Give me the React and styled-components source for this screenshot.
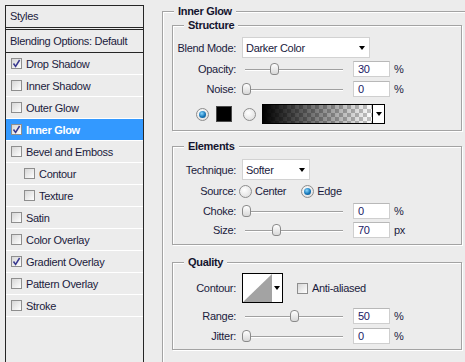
import React from "react";
import styled, { createGlobalStyle, css } from "styled-components";

const GlobalStyle = createGlobalStyle`
  html, body {
    margin: 0;
    padding: 0;
    background: #ececec;
    overflow: hidden;
  }
  body {
    font-family: "Liberation Sans", Arial, sans-serif;
    font-size: 11px;
    letter-spacing: -0.3px;
    color: #1b1b3d;
  }
`;

const Page = styled.div`
  display: flex;
  align-items: flex-start;
  height: 362px;
  overflow: hidden;
`;

/* ---------- left: styles list ---------- */

const StylesPanel = styled.div`
  margin: 5px 0 0 5px;
  width: 139px;
  height: 357px;
  box-sizing: border-box;
  border: 1px solid #262626;
  border-bottom: none;
  display: flex;
  flex-direction: column;
  flex-shrink: 0;
`;

const PanelHeader = styled.div`
  height: 21px;
  line-height: 21px;
  padding-left: 4px;
  border-bottom: 3px double #262626;
`;

const BlendingRow = styled.div`
  height: 22px;
  line-height: 22px;
  padding-left: 4px;
  border-bottom: 1px solid #262626;
`;

const StyleItem = styled.div`
  height: 21px;
  display: flex;
  align-items: center;
  gap: 4px;
  padding-left: ${(p) => (p.$indent ? 18 : 5)}px;
  border-bottom: 1px solid #ffffff;
  ${(p) =>
    p.$active &&
    css`
      background: #3399ff;
      color: #ffffff;
      font-weight: bold;
    `}
`;

const Box = styled.span`
  width: 11px;
  height: 11px;
  box-sizing: border-box;
  border: 1px solid #8e8e8e;
  background: linear-gradient(135deg, #d6d6d6, #ffffff);
  display: inline-flex;
  align-items: center;
  justify-content: center;
  flex-shrink: 0;
  margin-left: ${(p) => p.$ml || 0}px;
`;

const Checkbox = ({ checked, ml }) => (
  <Box $ml={ml}>
    {checked && (
      <svg width="9" height="9" viewBox="0 0 9 9">
        <path d="M1.5 4.5 L3.6 7.5 L7.6 1" fill="none" stroke="#37378f" strokeWidth="1.5" />
      </svg>
    )}
  </Box>
);

const styleItems = [
  { name: "Drop Shadow", checked: true },
  { name: "Inner Shadow" },
  { name: "Outer Glow" },
  { name: "Inner Glow", checked: true, active: true },
  { name: "Bevel and Emboss" },
  { name: "Contour", indent: true },
  { name: "Texture", indent: true },
  { name: "Satin" },
  { name: "Color Overlay" },
  { name: "Gradient Overlay", checked: true },
  { name: "Pattern Overlay" },
  { name: "Stroke" },
];

/* ---------- right: options ---------- */

const Options = styled.div`
  margin-left: 18px;
  padding-top: 5px;
  flex: 1;
  min-width: 0;
`;

const Group = styled.fieldset`
  margin: ${(p) => p.$mt || 0}px 0 0 ${(p) => p.$ml || 0}px;
  padding: 0 0 ${(p) => p.$pb || 0}px 0;
  width: ${(p) => p.$w}px;
  min-width: 0;
  box-sizing: border-box;
  border: 1px solid #a3a3a3;
  box-shadow: inset 1px 1px 0 #ffffff, 1px 1px 0 #ffffff;

  ${(p) =>
    p.$open &&
    css`
      height: 357px;
      border-right: none;
      border-bottom: none;
      box-shadow: inset 1px 1px 0 #ffffff;
    `}
`;

const Legend = styled.legend`
  margin-left: 11px;
  padding: 0 4px;
  height: 12px;
  line-height: 12px;
  font-weight: bold;
  color: #14142e;
  background: #ececec;
`;

const Row = styled.div`
  display: flex;
  align-items: center;
  height: ${(p) => p.$h}px;
  margin-top: ${(p) => p.$mt}px;
  padding-left: ${(p) => p.$pl || 0}px;
`;

const Label = styled.span`
  width: 63px;
  flex-shrink: 0;
  text-align: right;
  margin-right: ${(p) => (p.$gap == null ? 6 : p.$gap)}px;
`;

const SelectBox = styled.div`
  width: ${(p) => p.$w}px;
  height: 21px;
  box-sizing: border-box;
  border: 1px solid #d2d2d2;
  background: #ffffff;
  display: flex;
  align-items: center;
  padding-left: 3px;
`;

const Arrow = styled.span`
  width: 0;
  height: 0;
  border-left: 3.5px solid transparent;
  border-right: 3.5px solid transparent;
  border-top: 4px solid #000000;
  margin-left: auto;
  margin-right: ${(p) => (p.$mr == null ? 4 : p.$mr)}px;
`;

const Select = ({ w, value }) => (
  <SelectBox $w={w}>
    {value}
    <Arrow />
  </SelectBox>
);

const Track = styled.div`
  position: relative;
  width: 98px;
  height: 16px;
  margin-left: 3px;
  margin-right: 10px;
  flex-shrink: 0;

  &::before {
    content: "";
    position: absolute;
    left: 0;
    right: 0;
    top: 8px;
    height: 1px;
    background: #a0a0a0;
    box-shadow: 0 1px 0 #ffffff;
  }
`;

const Thumb = styled.span`
  position: absolute;
  top: 2px;
  width: 9px;
  height: 12px;
  box-sizing: border-box;
  border: 1px solid #8a8a8a;
  border-radius: 4px 4px 3px 3px;
  background: linear-gradient(#ffffff, #d8d8d8);
`;

const Slider = ({ pos }) => (
  <Track>
    <Thumb style={{ left: 1 + (pos / 100) * 96 - 4.5 }} />
  </Track>
);

const NumberField = styled.div`
  width: 37px;
  height: 16px;
  box-sizing: border-box;
  border: 1px solid #cfcfcf;
  border-top-color: #b8b8b8;
  background: #ffffff;
  padding-left: 4px;
  line-height: 14px;
  color: #1a1a66;
`;

const Unit = styled.span`
  margin-left: 4px;
`;

const SliderRow = ({ label, pos, value, unit, mt }) => (
  <Row $h={16} $mt={mt}>
    <Label>{label}</Label>
    <Slider pos={pos} />
    <NumberField>{value}</NumberField>
    <Unit>{unit}</Unit>
  </Row>
);

const RadioDot = styled.span`
  width: 13px;
  height: 13px;
  box-sizing: border-box;
  border-radius: 50%;
  border: 1px solid #8d8d8d;
  background: radial-gradient(circle at 40% 35%, #ffffff, #d9d9d9);
  display: inline-flex;
  align-items: center;
  justify-content: center;
  flex-shrink: 0;
  margin-left: ${(p) => p.$ml || 0}px;
  margin-right: ${(p) => (p.$mr == null ? 3 : p.$mr)}px;

  ${(p) =>
    p.$on &&
    css`
      &::after {
        content: "";
        width: 7px;
        height: 7px;
        border-radius: 50%;
        background: radial-gradient(circle at 40% 35%, #8ad8ff, #1576b8 55%, #0b4c7e);
      }
    `}
`;

const Swatch = styled.span`
  width: 16px;
  height: 16px;
  box-sizing: border-box;
  border: 1px solid #4a4a4a;
  background: #000000;
  margin-left: 7px;
  margin-right: 11px;
`;

const GradientPicker = styled.div`
  width: 123px;
  height: 20px;
  box-sizing: border-box;
  border: 1px solid #000000;
  display: flex;
  margin-left: 3px;
`;

const GradientPreview = styled.div`
  flex: 1;
  background: linear-gradient(to right, #000000, rgba(0, 0, 0, 0)),
    conic-gradient(#c4c4c4 25%, #ffffff 0 50%, #c4c4c4 0 75%, #ffffff 0) 0 0 / 8px 8px;
`;

const DropPart = styled.div`
  width: ${(p) => p.$w}px;
  border-left: ${(p) => (p.$divider ? "1px solid #000000" : "none")};
  background: #ffffff;
  display: flex;
  align-items: center;
  justify-content: center;

  ${Arrow} {
    margin: 0;
  }
`;

const ContourPicker = styled.div`
  width: 41px;
  height: 30px;
  box-sizing: border-box;
  border: 1px solid #000000;
  display: flex;
  background: #ffffff;
`;

const Option = styled.span`
  margin-right: ${(p) => p.$mr || 0}px;
`;

const App = () => {
  return (
    <>
      <GlobalStyle />
      <Page>
        <StylesPanel>
          <PanelHeader>Styles</PanelHeader>
          <BlendingRow>Blending Options: Default</BlendingRow>
          {styleItems.map((item) => (
            <StyleItem key={item.name} $active={item.active} $indent={item.indent}>
              <Checkbox checked={item.checked} />
              {item.name}
            </StyleItem>
          ))}
        </StylesPanel>

        <Options>
          <Group $w={303} $open>
            <Legend>Inner Glow</Legend>

            <Group $w={290} $ml={9} $mt={2} $pb={6}>
              <Legend>Structure</Legend>
              <Row $h={21} $mt={6}>
                <Label>Blend Mode:</Label>
                <Select w={128} value="Darker Color" />
              </Row>
              <SliderRow label="Opacity:" pos={30} value="30" unit="%" mt={3} />
              <SliderRow label="Noise:" pos={0} value="0" unit="%" mt={4} />
              <Row $h={20} $mt={7} $pl={23}>
                <RadioDot $on $mr={0} />
                <Swatch />
                <RadioDot $mr={3} />
                <GradientPicker>
                  <GradientPreview />
                  <DropPart $w={11} $divider>
                    <Arrow />
                  </DropPart>
                </GradientPicker>
              </Row>
            </Group>

            <Group $w={290} $ml={9} $mt={9} $pb={6}>
              <Legend>Elements</Legend>
              <Row $h={21} $mt={7}>
                <Label>Technique:</Label>
                <Select w={68} value="Softer" />
              </Row>
              <Row $h={14} $mt={4}>
                <Label $gap={3}>Source:</Label>
                <RadioDot />
                <Option $mr={15}>Center</Option>
                <RadioDot $on />
                <Option>Edge</Option>
              </Row>
              <SliderRow label="Choke:" pos={0} value="0" unit="%" mt={5} />
              <SliderRow label="Size:" pos={32} value="70" unit="px" mt={3} />
            </Group>

            <Group $w={290} $ml={9} $mt={11} $pb={5}>
              <Legend>Quality</Legend>
              <Row $h={30} $mt={5}>
                <Label>Contour:</Label>
                <ContourPicker>
                  <svg width="29" height="28" viewBox="0 0 29 28">
                    <polygon points="0,28 29,0 29,28" fill="#a3a3a3" />
                  </svg>
                  <DropPart $w={10}>
                    <Arrow />
                  </DropPart>
                </ContourPicker>
                <Checkbox ml={14} />
                <Unit>Anti-aliased</Unit>
              </Row>
              <SliderRow label="Range:" pos={50} value="50" unit="%" mt={5} />
              <SliderRow label="Jitter:" pos={0} value="0" unit="%" mt={4} />
            </Group>
          </Group>
        </Options>
      </Page>
    </>
  );
};

export default App;
